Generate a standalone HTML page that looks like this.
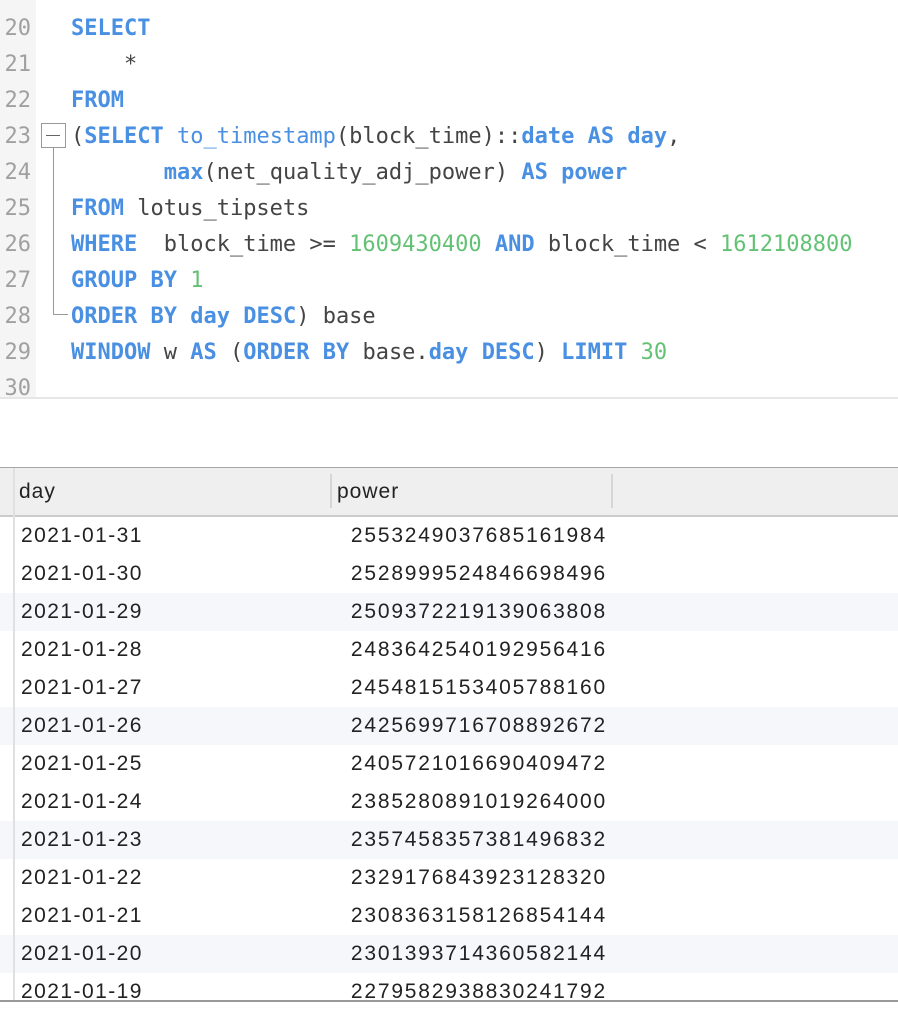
<!DOCTYPE html>
<html><head><meta charset="utf-8"><style>
body{margin:0;width:898px;height:1006px;overflow:hidden;background:#fff;position:relative;font-family:"Liberation Sans",sans-serif}
.gut{position:absolute;left:0;top:0;width:36px;height:398px;background:#f5f5f5}
.ln{position:absolute;left:0;width:31px;text-align:right;font:22px/36px "DejaVu Sans Mono",monospace;color:#a0a0a0}
.cd{position:absolute;left:71px;font:22px/36px "DejaVu Sans Mono",monospace;color:#444;white-space:pre}
.k{color:#4a90e2;font-weight:bold}
.f{color:#4a90e2}
.n{color:#63c174}
.sep{position:absolute;left:0;top:397px;width:898px;height:2px;background:#e6e6e6}
.hdr{position:absolute;left:0;top:467px;width:898px;height:47px;background:#efefef;border-top:1px solid #a8a8a8;border-bottom:2px solid #ccc}
.h{position:absolute;top:0;font-size:21px;letter-spacing:1px;line-height:47px;color:#222}
.vl{position:absolute;left:13px;top:468px;width:2px;height:534px;background:#e0e0e0}
.row{position:absolute;left:0;width:898px;height:38px;font-size:21px;line-height:38px;color:#222}
.alt{background:#f5f7fa}
.d{position:absolute;left:21px;letter-spacing:1.45px}
.p{position:absolute;right:291px;letter-spacing:1.8px}
</style></head><body>
<div class="gut"></div>
<div class="ln" style="top:11px">20</div>
<div class="ln" style="top:47px">21</div>
<div class="ln" style="top:83px">22</div>
<div class="ln" style="top:119px">23</div>
<div class="ln" style="top:155px">24</div>
<div class="ln" style="top:191px">25</div>
<div class="ln" style="top:227px">26</div>
<div class="ln" style="top:263px">27</div>
<div class="ln" style="top:299px">28</div>
<div class="ln" style="top:335px">29</div>
<div class="ln" style="top:371px">30</div>
<div style="position:absolute;left:41px;top:123px;width:23px;height:23px;border:1px solid #999;background:#fff"></div>
<div style="position:absolute;left:46px;top:135px;width:14px;height:1px;background:#666"></div>
<div style="position:absolute;left:53px;top:148px;width:1px;height:166px;background:#999"></div>
<div style="position:absolute;left:53px;top:314px;width:15px;height:1px;background:#999"></div>
<div class="cd" style="top:11px"><span class="k">SELECT</span></div>
<div class="cd" style="top:47px">    *</div>
<div class="cd" style="top:83px"><span class="k">FROM</span></div>
<div class="cd" style="top:119px;left:71px">(<span class="k">SELECT</span> <span class="f">to_timestamp</span>(block_time)::<span class="k">date</span> <span class="k">AS</span> <span class="k">day</span>,</div>
<div class="cd" style="top:155px">       <span class="k">max</span>(net_quality_adj_power) <span class="k">AS</span> <span class="k">power</span></div>
<div class="cd" style="top:191px"><span class="k">FROM</span> lotus_tipsets</div>
<div class="cd" style="top:227px"><span class="k">WHERE</span>  block_time &gt;= <span class="n">1609430400</span> <span class="k">AND</span> block_time &lt; <span class="n">1612108800</span></div>
<div class="cd" style="top:263px"><span class="k">GROUP BY</span> <span class="n">1</span></div>
<div class="cd" style="top:299px"><span class="k">ORDER BY</span> <span class="k">day</span> <span class="k">DESC</span>) base</div>
<div class="cd" style="top:335px"><span class="k">WINDOW</span> w <span class="k">AS</span> (<span class="k">ORDER BY</span> base.<span class="k">day</span> <span class="k">DESC</span>) <span class="k">LIMIT</span> <span class="n">30</span></div>
<div class="sep"></div>
<div class="hdr">
<div class="h" style="left:19px">day</div>
<div style="position:absolute;left:330px;top:6px;width:2px;height:34px;background:#d6d6d6"></div>
<div class="h" style="left:337px">power</div>
<div style="position:absolute;left:611px;top:6px;width:2px;height:34px;background:#d6d6d6"></div>
</div>
<div class="row" style="top:517px"><span class="d">2021-01-31</span><span class="p">2553249037685161984</span></div>
<div class="row" style="top:555px"><span class="d">2021-01-30</span><span class="p">2528999524846698496</span></div>
<div class="row alt" style="top:593px"><span class="d">2021-01-29</span><span class="p">2509372219139063808</span></div>
<div class="row" style="top:631px"><span class="d">2021-01-28</span><span class="p">2483642540192956416</span></div>
<div class="row" style="top:669px"><span class="d">2021-01-27</span><span class="p">2454815153405788160</span></div>
<div class="row alt" style="top:707px"><span class="d">2021-01-26</span><span class="p">2425699716708892672</span></div>
<div class="row" style="top:745px"><span class="d">2021-01-25</span><span class="p">2405721016690409472</span></div>
<div class="row" style="top:783px"><span class="d">2021-01-24</span><span class="p">2385280891019264000</span></div>
<div class="row alt" style="top:821px"><span class="d">2021-01-23</span><span class="p">2357458357381496832</span></div>
<div class="row" style="top:859px"><span class="d">2021-01-22</span><span class="p">2329176843923128320</span></div>
<div class="row" style="top:897px"><span class="d">2021-01-21</span><span class="p">2308363158126854144</span></div>
<div class="row alt" style="top:935px"><span class="d">2021-01-20</span><span class="p">2301393714360582144</span></div>
<div class="row" style="top:973px"><span class="d">2021-01-19</span><span class="p">2279582938830241792</span></div>
<div class="vl"></div>
<div style="position:absolute;left:0;top:1000px;width:898px;height:6px;background:#fff;border-top:2px solid #999"></div>
</body></html>
